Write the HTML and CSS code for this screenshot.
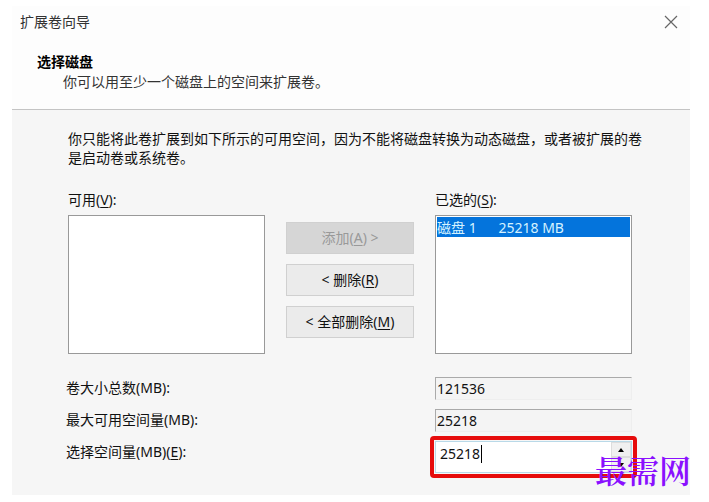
FILE: index.html
```html
<!DOCTYPE html>
<html lang="zh-CN">
<head>
  <meta charset="utf-8">
  <title>扩展卷向导</title>
  <link rel="stylesheet" href="styles.css">
</head>
<body>
  <div class="dialog">
    <header class="header">
      <div class="title-bar">
        <span>扩展卷向导</span>
        <button type="button" class="close" aria-label="关闭">
          <svg width="14" height="14" viewBox="0 0 14 14"><path d="M1 1L13 13M13 1L1 13" fill="none" stroke="#666" stroke-width="1.2"/></svg>
        </button>
      </div>
      <h1>选择磁盘</h1>
      <p class="subtitle">你可以用至少一个磁盘上的空间来扩展卷。</p>
    </header>

    <form class="content">
      <p class="intro">你只能将此卷扩展到如下所示的可用空间，因为不能将磁盘转换为动态磁盘，或者被扩展的卷是启动卷或系统卷。</p>

      <div class="picker">
        <div class="list">
          <label for="available">可用(<u>V</u>):</label>
          <select id="available" size="7"></select>
        </div>
        <div class="actions">
          <button type="button" disabled>添加(<u>A</u>) &gt;</button>
          <button type="button">&lt; 删除(<u>R</u>)</button>
          <button type="button">&lt; 全部删除(<u>M</u>)</button>
        </div>
        <div class="list">
          <label for="selected">已选的(<u>S</u>):</label>
          <select id="selected" size="7">
            <option class="current">磁盘 1&nbsp;&nbsp;&nbsp;&nbsp;&nbsp; 25218 MB</option>
          </select>
        </div>
      </div>

      <div class="sizes">
        <label for="total">卷大小总数(MB):</label>
        <input type="text" id="total" class="readonly" value="121536" readonly>

        <label for="max">最大可用空间量(MB):</label>
        <input type="text" id="max" class="readonly" value="25218" readonly>

        <label for="amount">选择空间量(MB)(<u>E</u>):</label>
        <div class="spinner">
          <input type="text" id="amount" value="25218">
          <span class="caret"></span>
          <div class="spin-buttons">
            <button type="button" aria-label="增加"><svg width="6" height="4" viewBox="0 0 6 4"><path d="M0 4L3 0L6 4Z"/></svg></button>
            <button type="button" aria-label="减少"><svg width="6" height="4" viewBox="0 0 6 4"><path d="M0 0L3 4L6 0Z"/></svg></button>
          </div>
          <span class="highlight"></span>
        </div>
      </div>
    </form>
    <span class="watermark">最需网</span>
  </div>
</body>
</html>
```

FILE: styles.css
```css
body {
  margin: 0;
  padding: 6px 19px 7px 12px;
  background-color: #fff;
  color: #111;
  font-family: "Noto Sans", "Noto Sans CJK SC", sans-serif;
  font-size: 14px;
  line-height: 20px;
}

button,
input,
select {
  box-sizing: border-box;
  font: inherit;
  color: inherit;
}

h1,
p {
  margin: 0;
}

u {
  text-underline-offset: 2px;
  text-decoration-thickness: 1px;
}

.dialog {
  position: relative;
  background-color: #f6f6f6;
}

.header {
  padding: 6px 11px 17px 8px;
  background-color: #fdfdfd;
  border-bottom: 1px solid #c4c4c4;
}

.title-bar {
  display: flex;
  justify-content: space-between;
  align-items: center;
  margin-bottom: 20px;
  color: #333;
}

.close {
  display: flex;
  padding: 1px;
  border: none;
  background: none;
}

h1 {
  padding-left: 17px;
  font-size: 14px;
  line-height: 20px;
  color: #000;
}

.subtitle {
  padding-left: 43px;
  color: #333;
}

.content {
  padding: 19px 44px 22px 54px;
}

.intro {
  padding-left: 2px;
  line-height: 19px;
}

.picker {
  display: grid;
  grid-template-columns: 1fr 128px 1fr;
  column-gap: 21px;
  margin: 23px 14px 23px 2px;
}

.list {
  display: flex;
  flex-direction: column;
  gap: 5px;
}

.list select {
  width: 100%;
  height: 139px;
  padding: 1px;
  border: 1px solid #999;
  border-radius: 0;
  background-color: #fff;
  overflow: hidden;
}

.list option {
  min-height: 19px;
  padding: 0;
  line-height: 19px;
}

.list .current {
  background-color: #0474dc;
  color: #d4f2ff;
}

.actions {
  display: flex;
  flex-direction: column;
  gap: 10px;
  padding-top: 32px;
}

.actions button {
  height: 32px;
  padding: 0;
  border: 1px solid #d0d0d0;
  background-color: #ebebeb;
}

.actions button:disabled {
  background-color: #d6d6d6;
  color: #999;
}

.sizes {
  display: grid;
  grid-template-columns: 1fr 197px;
  row-gap: 9px;
  align-items: start;
  margin-right: 14px;
  line-height: 22px;
}

.readonly {
  width: 100%;
  height: 23px;
  padding: 0 1px;
  border: 1px solid #eee;
  border-top-color: #aaa;
  border-left-color: #aaa;
  background-color: #f4f4f4;
}

.spinner {
  position: relative;
  display: flex;
  border: 1px solid #b9d9e8;
  background-color: #fff;
}

.spinner input {
  flex: 1;
  min-width: 0;
  height: 30px;
  padding: 0 4px 8px;
  border: none;
  background: none;
  outline: none;
}

.caret {
  position: absolute;
  top: 3px;
  left: 45px;
  width: 1px;
  height: 18px;
  background-color: #000;
}

.spin-buttons {
  display: flex;
  flex-direction: column;
  width: 20px;
}

.spin-buttons button {
  display: flex;
  flex: 1;
  justify-content: center;
  align-items: center;
  padding: 0;
  border: 1px solid #ddd;
  background-color: #f0f0f0;
}

/* red frame around the amount field */
.highlight {
  position: absolute;
  inset: -6px;
  border: 4px solid #e60c0c;
  border-radius: 4px;
  pointer-events: none;
}

.watermark {
  position: absolute;
  right: -1px;
  bottom: 10px;
  font-family: "Noto Serif CJK SC", "Liberation Serif", serif;
  font-size: 32px;
  font-weight: 600;
  line-height: 32px;
  color: #8a10ff;
}
```
